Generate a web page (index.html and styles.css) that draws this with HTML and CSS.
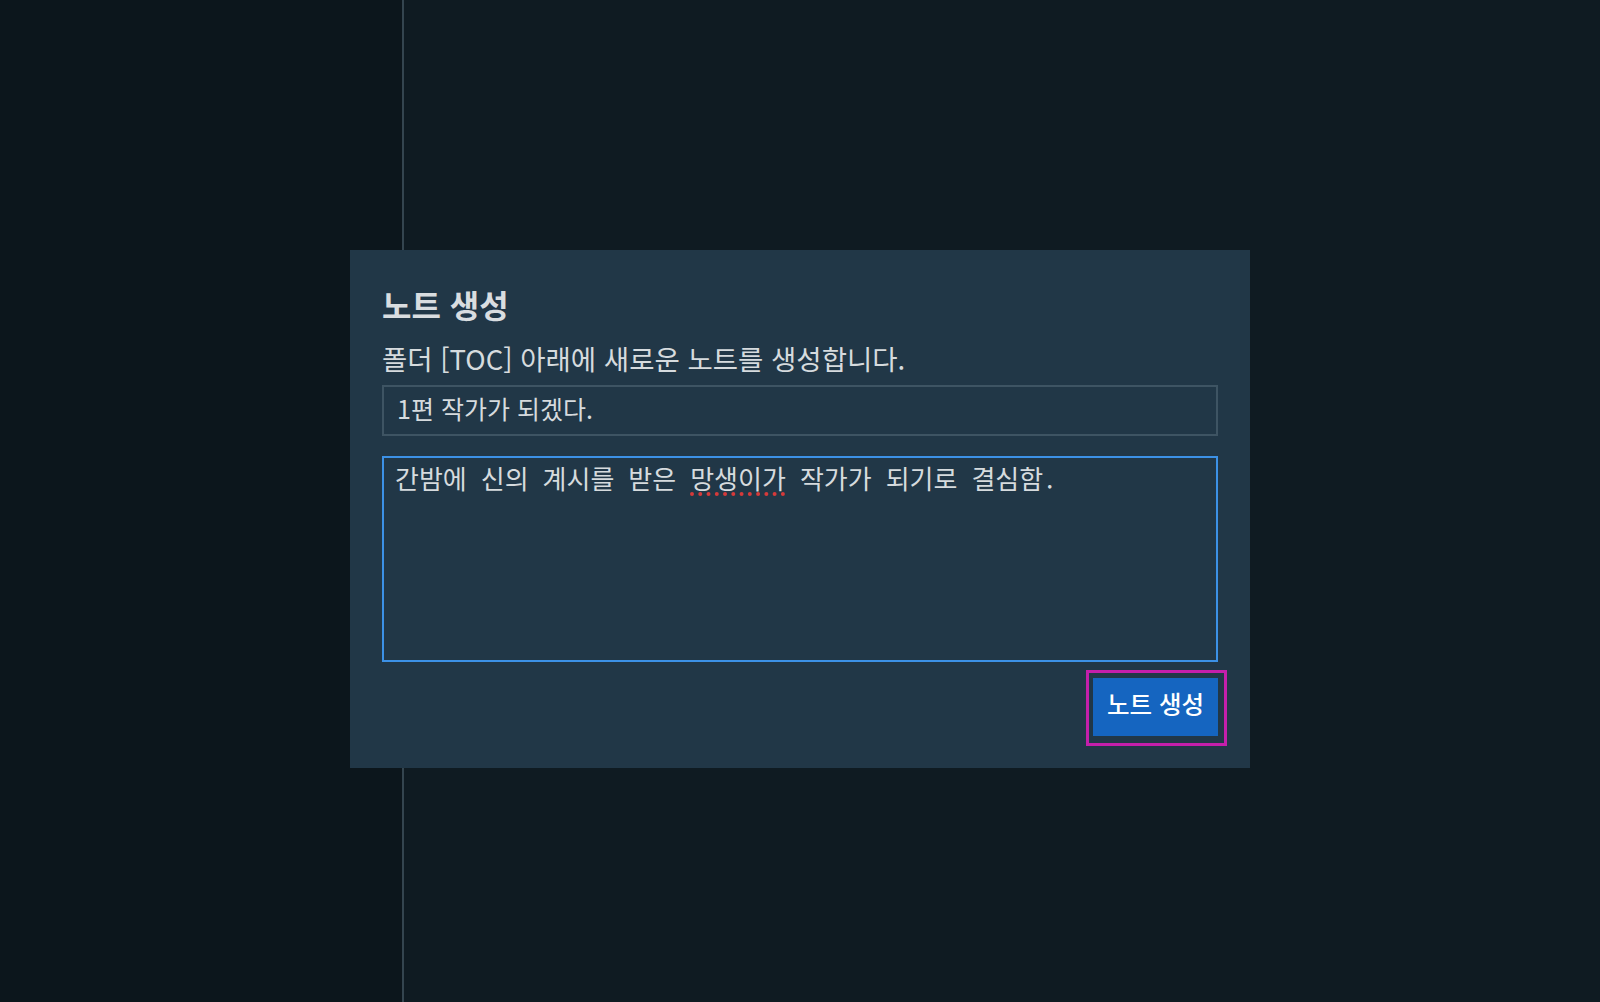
FILE: index.html
```html
<!DOCTYPE html>
<html lang="ko">
<head>
<meta charset="utf-8">
<title>노트 생성</title>
<link rel="stylesheet" href="styles.css">
</head>
<body>
<div class="app">
  <aside class="sidebar"></aside>
  <main class="main"></main>
</div>
<div class="dialog" role="dialog" aria-labelledby="dlg-title">
  <h2 class="dialog-title" id="dlg-title">노트 생성</h2>
  <p class="dialog-desc">폴더 [TOC] 아래에 새로운 노트를 생성합니다.</p>
  <div class="field-input">1편 작가가 되겠다.</div>
  <div class="field-area">간밤에 신의 계시를 받은 <span class="misspelled">망생이가</span> 작가가 되기로 결심함.</div>
  <div class="actions">
    <button class="btn-primary" type="button">노트 생성</button>
  </div>
</div>
</body>
</html>
```

FILE: styles.css
```css
html, body {
  margin: 0;
  padding: 0;
  height: 100%;
}
body {
  background: #0f1b22;
  font-family: "Noto Sans CJK KR", "Noto Sans", sans-serif;
  color: #d6dbde;
}
.app {
  display: flex;
  height: 100vh;
}
.sidebar {
  width: 402px;
  flex: 0 0 402px;
  background: #0c161c;
  border-right: 2px solid #34454f;
}
.main {
  flex: 1;
  background: #0f1b22;
}
.dialog {
  position: fixed;
  top: 250px;
  left: 350px;
  width: 900px;
  box-sizing: border-box;
  padding: 32px;
  background: #213747;
}
.dialog-title {
  margin: 0;
  font-size: 32px;
  font-weight: 700;
  line-height: 44px;
  color: #d9dde0;
}
.dialog-desc {
  margin: 13px 0 0;
  font-size: 27.5px;
  line-height: 38px;
  color: #d6dbde;
}
.field-input {
  margin-top: 8px;
  height: 51px;
  box-sizing: border-box;
  border: 2px solid #3e5463;
  padding: 0 13px 5px;
  font-size: 25px;
  line-height: 42px;
  color: #d6dbde;
}
.field-area {
  margin-top: 20px;
  height: 206px;
  box-sizing: border-box;
  border: 2px solid #3c91e6;
  padding: 3px 11px;
  font-family: "Noto Sans Mono CJK KR", "Noto Sans CJK KR", monospace;
  font-size: 26px;
  line-height: 34px;
  word-spacing: 1px;
  white-space: pre-wrap;
  color: #d6dbde;
}
.misspelled {
  text-decoration: underline dotted #d63a3a;
  text-decoration-thickness: 4px;
  text-underline-offset: 3px;
}
.actions {
  display: flex;
  justify-content: flex-end;
  margin-top: 16px;
}
.btn-primary {
  position: relative;
  height: 58px;
  padding: 0 14px 7px;
  border: 0;
  background: #1565c0;
  color: #ffffff;
  font-family: "Noto Sans CJK KR", "Noto Sans", sans-serif;
  font-size: 24.5px;
  font-weight: 500;
  line-height: 51px;
}
.btn-primary::after {
  content: "";
  position: absolute;
  top: -8px;
  left: -7px;
  right: -9px;
  bottom: -10px;
  border: 3px solid #c41fab;
}
```
